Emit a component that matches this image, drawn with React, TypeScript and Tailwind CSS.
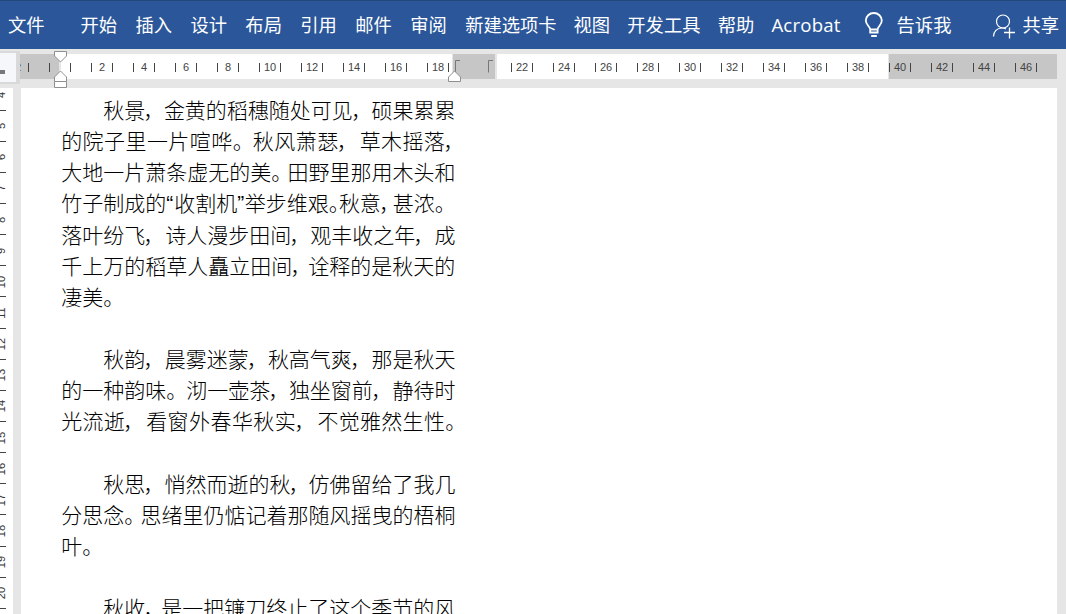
import React from 'react';
import { clsx } from 'clsx';

const UNIT = 21;

const mainTabs = ['开始', '插入', '设计', '布局', '引用', '邮件', '审阅', '新建选项卡'];
const extraTabs = ['视图', '开发工具', '帮助'];

// Each run is [text, width in px], so a justified line keeps its own spacing
type Run = [string, number];
type Line = { indent?: number; runs: Run[] };

const lines: Line[] = [
  { indent: 42, runs: [['秋景', 42], [',', 18.7], ['金黄的稻穗随处可见', 189], [',', 18.6], ['硕果累累', 84]] },
  { runs: [['的院子里一片喧哗', 171.5], ['。', 20], ['秋风萧瑟', 86], [',', 21], ['草木摇落', 85.5], [',', 21]] },
  { runs: [['大地一片萧条虚无的美', 210], ['。', 16.3], ['田野里那用木头和', 168]] },
  { runs: [['竹子制成的', 105], ['“', 8], ['收割机', 63], ['”', 7.5], ['举步维艰', 84], ['。', 10.2], ['秋意', 42], [',', 11.8], ['甚浓', 42], ['。', 21]] },
  { runs: [['落叶纷飞', 84], [',', 20], ['诗人漫步田间', 126], [',', 19], ['观丰收之年', 105], [',', 19.3], ['成', 21]] },
  { runs: [['千上万的稻草人矗立田间', 231], [',', 16], ['诠释的是秋天的', 147]] },
  { runs: [['凄美', 42], ['。', 21]] },
  { runs: [] },
  { indent: 42, runs: [['秋韵', 42], [',', 19.5], ['晨雾迷蒙', 84], [',', 19.2], ['秋高气爽', 84], [',', 19.6], ['那是秋天', 84]] },
  { runs: [['的一种韵味', 105], ['。', 20], ['沏一壶茶', 84], [',', 18.7], ['独坐窗前', 84], [',', 19.6], ['静待时', 63]] },
  { runs: [['光流逝', 63.7], [',', 21.3], ['看窗外春华秋实', 150], [',', 21.3], ['不觉雅然生性', 127.7], ['。', 21]] },
  { runs: [] },
  { indent: 42, runs: [['秋思', 42], [',', 19.3], ['悄然而逝的秋', 126], [',', 18], ['仿佛留给了我几', 147]] },
  { runs: [['分思念', 63], ['。', 16.3], ['思绪里仍惦记着那随风摇曳的梧桐', 315]] },
  { runs: [['叶', 21], ['。', 21]] },
  { runs: [] },
  { indent: 42, runs: [['秋收', 42], [',', 16], ['是一把镰刀终止了这个季节的风', 294]] },
];

const TextRun = ({ run }: { run: Run }) => {
  const [text, width] = run;
  const isQuote = text === '“' || text === '”';
  const isComma = text === ',';
  return (
    <span
      className={clsx(
        'shrink-0 whitespace-nowrap',
        isQuote && "font-['Liberation_Sans',sans-serif]",
        isComma && '-ml-[2px] mr-[2px]'
      )}
      style={{ width, letterSpacing: isQuote ? 0 : width / text.length - UNIT }}
    >
      {isComma ? '\uff0c' : text}
    </span>
  );
};

const Ribbon = () => (
  <header className="flex h-[49px] items-center border-t border-[#24487c] bg-[#2b579a] pl-[8px] text-[18.3px] text-white font-['Open_Sans','Noto_Sans_CJK_SC',sans-serif]">
    <span className="w-[72.5px] shrink-0 whitespace-nowrap">文件</span>
    <nav className="flex shrink-0 whitespace-nowrap">
      <div className="flex gap-[18.4px]">
        {mainTabs.map((tab) => (
          <span key={tab}>{tab}</span>
        ))}
      </div>
      <div className="ml-[17px] flex items-center gap-[17.2px]">
        {extraTabs.map((tab) => (
          <span key={tab}>{tab}</span>
        ))}
        <span className="text-[18.6px] tracking-[0.2px]">Acrobat</span>
      </div>
    </nav>
    <div className="ml-auto flex shrink-0 items-center whitespace-nowrap pr-[7px]">
      <svg width="20" height="26" viewBox="0 0 20 26" fill="none" stroke="white" strokeWidth="1.8" className="mr-[13px]">
        <path d="M6.2 17.5c0-3-4.400-4.400-4.400-8.900a8 7.600 0 0 1 16 0c0 4.500-4.200 5.900-4.200 8.900v3H6.200zM6.200 17.500h7.500M7.200 24h5.600" />
      </svg>
      <span>告诉我</span>
      <svg width="24" height="25" viewBox="0 0 24 25" fill="none" stroke="white" strokeWidth="1.2" className="ml-[40.5px] mr-[6.5px] mt-[2px]">
        <circle cx="11" cy="7.500" r="6.500" />
        <path d="M1.500 22.500c0-5 3.500-8.500 8.500-8.500 1.500 0 3 .3 4 1" />
        <path d="M17.500 13.500v11M12 18.500h11" strokeWidth="1.300" />
      </svg>
      <span>共享</span>
    </div>
  </header>
);

const Marker = ({ points, className, h }: { points: string; className: string; h: number }) => (
  <svg width="13" height={h} viewBox={`0 0 13 ${h}`} className={clsx('absolute', className)}>
    <polygon points={points} fill="white" stroke="#8f8f8f" />
  </svg>
);

const HorizontalRuler = () => (
  <div className="relative flex h-[39px] shrink-0 items-start">
    <div className="mt-[2px] flex h-[33px] w-5 shrink-0 items-center border-y-2 border-r-4 border-[#d9d9d9] bg-[#f5f7fa]">
      <span className="mt-[9px] h-[4px] w-[5px] bg-[#777]" />
    </div>
    <div className="relative mt-[5px] h-[25px] w-[1037px] overflow-hidden bg-white">
      <div className="absolute inset-0 flex">
        <div className="w-[39px] bg-[#c6c6c6]" />
        <div className="w-[2px] bg-[#e6e6e6]" />
        <div className="w-[391px]" />
        <div className="w-[1px] bg-[#e6e6e6]" />
        <div className="w-[42px] bg-[#c6c6c6]" />
        <div className="w-[2px] bg-[#e6e6e6]" />
        <div className="w-[391px]" />
        <div className="w-[1px] bg-[#e6e6e6]" />
        <div className="flex-1 bg-[#c6c6c6]" />
      </div>
      <div className="relative -ml-[13px] flex h-full items-center pt-[2px] text-[11px] text-[#444] font-['Liberation_Sans',sans-serif]">
        {Array.from({ length: 50 }, (_, i) => {
          const n = i - 2;
          const hidden = n === 20 || n === 21;
          return (
            <div
              key={i}
              className={clsx(
                'flex h-[9px] w-[21px] shrink-0 items-center justify-center border-l leading-none',
                hidden ? 'border-transparent' : 'border-[#444]'
              )}
            >
              {n !== 0 && n % 2 === 0 && !hidden ? Math.abs(n) : null}
            </div>
          );
        })}
      </div>
      <svg width="38" height="13" viewBox="0 0 38 13" fill="none" stroke="#777" className="absolute left-[435px] top-[6px]">
        <path d="M.5 12.500V.5H5M33.500 12.500V.5H38" />
      </svg>
    </div>
    <Marker className="left-[54px] top-[2px]" h={12} points="0.5,0.5 12.5,0.5 12.5,5 6.5,11 0.5,5" />
    <Marker className="left-[54px] top-[21px]" h={12} points="0.5,11.5 12.5,11.5 12.5,7 6.5,1 0.5,7" />
    <Marker className="left-[54px] top-[32px]" h={7} points="0.5,0.5 12.5,0.5 12.5,6.5 0.5,6.5" />
    <Marker className="left-[448px] top-[21px]" h={12} points="0.5,11.5 12.5,11.5 12.5,7 6.5,1 0.5,7" />
  </div>
);

const VerticalRuler = () => (
  <div className="w-[13px] shrink-0 overflow-hidden bg-white">
    <div className="-mt-[8.5px] flex flex-col text-[11px] text-[#333] font-['Liberation_Sans',sans-serif]">
      {Array.from({ length: 17 }, (_, i) => (
        <div key={i} className="flex h-[31.15px] w-[6px] shrink-0 items-center justify-end border-b border-[#444]">
          <span className="-ml-[20px] mt-px flex h-[12px] w-[12px] shrink-0 -rotate-90 items-end justify-center leading-[9px]">
            {i + 4}
          </span>
        </div>
      ))}
    </div>
  </div>
);

const App = () => {
  return (
    <div className="flex h-[614px] w-[1066px] flex-col overflow-hidden bg-[#e6e6e6]">
      <Ribbon />
      <HorizontalRuler />
      <div className="flex min-h-0 flex-1">
        <VerticalRuler />
        <main className="ml-2 w-[1036px] overflow-hidden bg-white pl-[40.2px] pt-[6px] text-[21px] font-light text-black font-['Noto_Sans_CJK_SC',sans-serif]">
          {lines.map((line, i) => (
            <p key={i} className="flex h-[31.15px] leading-[31px]" style={{ paddingLeft: line.indent }}>
              {line.runs.map((run, j) => (
                <TextRun key={j} run={run} />
              ))}
            </p>
          ))}
        </main>
      </div>
    </div>
  );
};

export default App;
